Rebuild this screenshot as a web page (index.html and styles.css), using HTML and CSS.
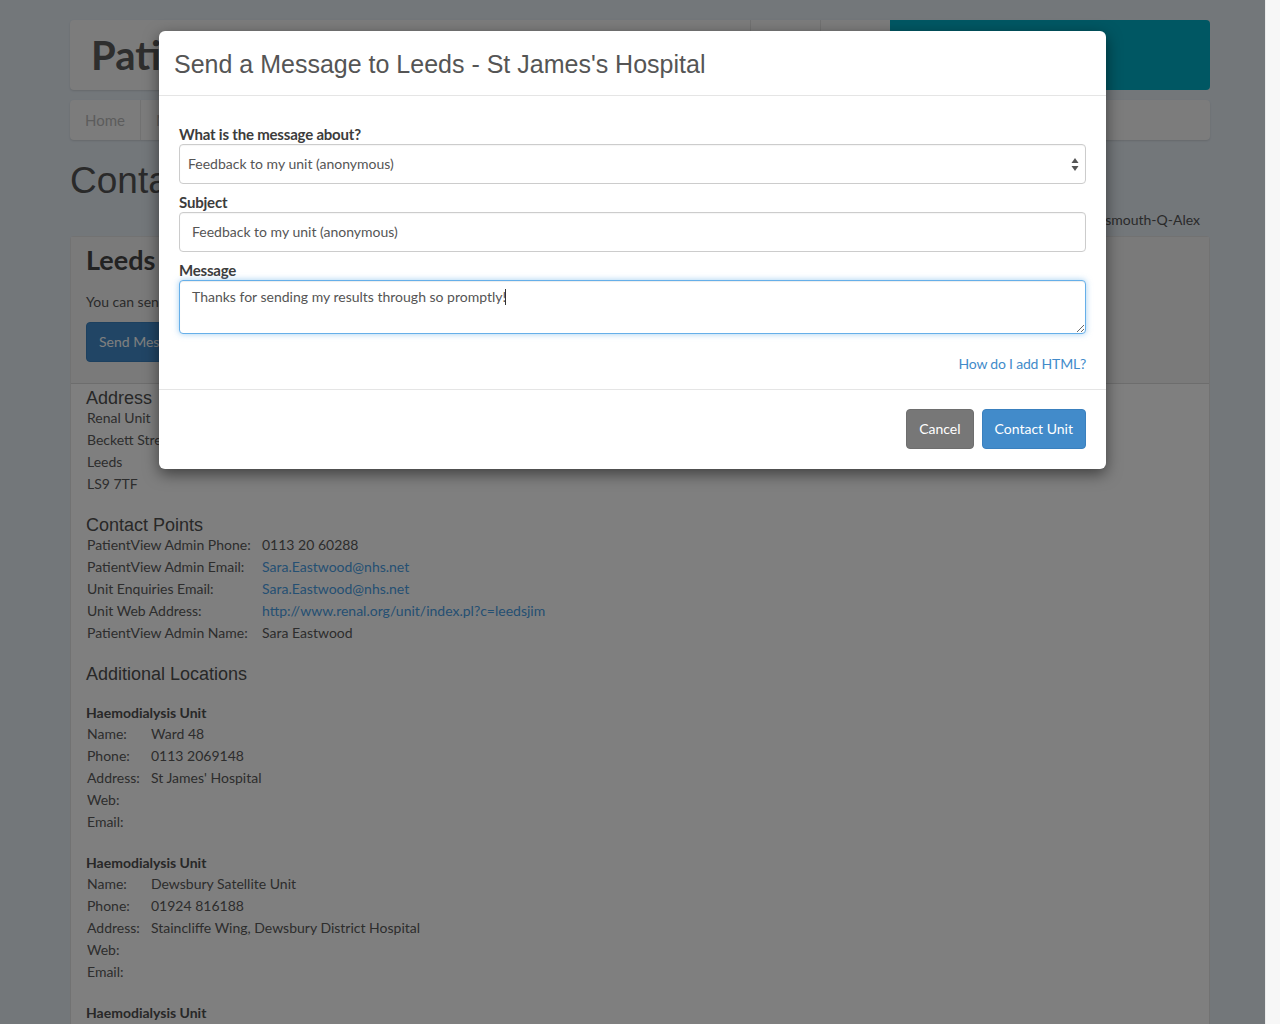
FILE: index.html
```html
<!DOCTYPE html>
<html lang="en">
<head>
<meta charset="utf-8">
<title>Contact Your Unit - PatientView</title>
<link rel="stylesheet" href="styles.css">
</head>
<body>
<div class="viewport">
  <div class="page">
    <div class="topbar">
      <div class="brand-box">
        <div class="brand">PatientView</div>
        <div class="top-links">
          <span class="top-link">Help</span>
          <span class="top-link">Log out</span>
        </div>
      </div>
      <div class="teal-box"></div>
    </div>
    <nav class="navbar">
      <span class="nav-item">Home</span>
      <span class="nav-item">My Results</span>
      <span class="nav-item">Messages</span>
    </nav>
    <div class="title-row">
      <h1 class="page-title">Contact Your Unit</h1>
      <div class="viewing">Patient: Portsmouth-Q-Alex</div>
    </div>
    <section class="panel">
      <div class="panel-heading">
        <h2 class="unit-name">Leeds - St James's Hospital</h2>
        <p class="intro">You can send a message to this unit using the button below.</p>
        <span class="btn btn-primary">Send Message</span>
      </div>
      <div class="panel-body">
        <h3 class="sec-title first">Address</h3>
        <div class="lines">
          <div>Renal Unit</div>
          <div>Beckett Street</div>
          <div>Leeds</div>
          <div>LS9 7TF</div>
        </div>
        <h3 class="sec-title">Contact Points</h3>
        <div class="kv kv-wide">
          <span>PatientView Admin Phone:</span><span>0113 20 60288</span>
          <span>PatientView Admin Email:</span><span class="link">Sara.Eastwood@nhs.net</span>
          <span>Unit Enquiries Email:</span><span class="link">Sara.Eastwood@nhs.net</span>
          <span>Unit Web Address:</span><span class="link">http://www.renal.org/unit/index.pl?c=leedsjim</span>
          <span>PatientView Admin Name:</span><span>Sara Eastwood</span>
        </div>
        <h3 class="sec-title">Additional Locations</h3>
        <div class="loc">
          <div class="loc-title">Haemodialysis Unit</div>
          <div class="kv kv-narrow">
            <span>Name:</span><span>Ward 48</span>
            <span>Phone:</span><span>0113 2069148</span>
            <span>Address:</span><span>St James' Hospital</span>
            <span>Web:</span><span></span>
            <span>Email:</span><span></span>
          </div>
        </div>
        <div class="loc">
          <div class="loc-title">Haemodialysis Unit</div>
          <div class="kv kv-narrow">
            <span>Name:</span><span>Dewsbury Satellite Unit</span>
            <span>Phone:</span><span>01924 816188</span>
            <span>Address:</span><span>Staincliffe Wing, Dewsbury District Hospital</span>
            <span>Web:</span><span></span>
            <span>Email:</span><span></span>
          </div>
        </div>
        <div class="loc">
          <div class="loc-title">Haemodialysis Unit</div>
          <div class="kv kv-narrow">
            <span>Name:</span><span>Seacroft Satellite Unit</span>
            <span>Phone:</span><span>0113 2063000</span>
          </div>
        </div>
      </div>
    </section>
  </div>

  <div class="backdrop"></div>

  <div class="modal-layer">
    <div class="modal">
      <div class="modal-header">
        <h4 class="modal-title">Send a Message to Leeds - St James's Hospital</h4>
      </div>
      <div class="modal-body">
        <label class="field-label" for="about">What is the message about?</label>
        <div class="select-wrap">
          <select id="about" class="form-control select">
            <option>Feedback to my unit (anonymous)</option>
          </select>
          <svg class="select-arrows" width="8" height="13" viewBox="0 0 8 13" aria-hidden="true">
            <path d="M4 0 L7.5 5 L0.5 5 Z" fill="#555"/>
            <path d="M0.5 8 L7.5 8 L4 13 Z" fill="#555"/>
          </svg>
        </div>
        <label class="field-label" for="subject">Subject</label>
        <input id="subject" class="form-control input" type="text" value="Feedback to my unit (anonymous)">
        <label class="field-label" for="message">Message</label>
        <div class="textarea-wrap">
          <textarea id="message" class="form-control textarea">Thanks for sending my results through so promptly!</textarea>
          <span class="caret"></span>
        </div>
        <div class="help-row"><span class="link-help">How do I add HTML?</span></div>
      </div>
      <div class="modal-footer">
        <span class="btn btn-default">Cancel</span>
        <span class="btn btn-primary">Contact Unit</span>
      </div>
    </div>
  </div>
</div>
<div class="scrollbar"></div>
</body>
</html>
```

FILE: styles.css
```css
* { box-sizing: border-box; }

html, body {
  margin: 0;
  padding: 0;
}

body {
  display: flex;
  width: 1280px;
  height: 1024px;
  overflow: hidden;
  font-family: Lato, "Open Sans", sans-serif;
  font-size: 14px;
  color: #555;
  background: #e6eef5;
}

.viewport {
  position: relative;
  width: 1265px;
  height: 1024px;
  overflow: hidden;
  flex: none;
}

.scrollbar {
  width: 15px;
  height: 1024px;
  flex: none;
  background: #f7f7f7;
  border-left: 1px solid #ececec;
}

.page {
  width: 1140px;
  margin-left: 70px;
  padding-top: 20px;
}

/* top header */
.topbar {
  display: flex;
  height: 70px;
}

.brand-box {
  flex: 1;
  display: flex;
  background: #f8f8f8;
  border-radius: 4px 0 0 4px;
  box-shadow: 0 1px 2px rgba(0,0,0,0.12);
}

.brand {
  flex: 1;
  padding-left: 21px;
  font-weight: 700;
  font-size: 40px;
  line-height: 70px;
  color: #5c5c5c;
}

.top-links {
  display: flex;
}

.top-link {
  width: 70px;
  border-left: 1px solid #e2e2e2;
  text-align: center;
  line-height: 70px;
  color: #999;
  font-size: 14px;
}

.teal-box {
  width: 320px;
  background: #00aec6;
  border-radius: 0 4px 4px 0;
}

/* nav */
.navbar {
  display: flex;
  height: 40px;
  margin-top: 10px;
  background: #f8f8f8;
  border-radius: 4px;
  box-shadow: 0 1px 2px rgba(0,0,0,0.12);
}

.nav-item {
  padding: 0 15px;
  line-height: 40px;
  font-size: 15px;
  color: #b8b8b8;
  border-right: 1px solid #e2e2e2;
}

/* title row */
.title-row {
  height: 96px;
}

.page-title {
  margin: 0;
  padding-top: 21px;
  font-family: "Liberation Sans", Arial, sans-serif;
  font-weight: 400;
  font-size: 37px;
  line-height: 40px;
  color: #555;
}

.viewing {
  text-align: right;
  padding-right: 10px;
  margin-top: 9px;
  font-size: 14px;
  line-height: 20px;
  color: #555;
}

/* panel */
.panel {
  background: #fff;
  border: 1px solid #e4e4e4;
  border-radius: 4px 4px 0 0;
  border-bottom: 0;
  height: 800px;
}

.panel-heading {
  height: 147px;
  padding: 6px 15px 0;
  background: #f5f5f5;
  border-bottom: 1px solid #dadada;
}

.unit-name {
  margin: 0;
  font-family: Lato, sans-serif;
  font-weight: 700;
  font-size: 27px;
  line-height: 34px;
  color: #444;
}

.intro {
  margin: 15px 0 0;
  line-height: 20px;
  color: #555;
}

.panel-heading .btn {
  margin-top: 10px;
}

.panel-body {
  padding: 5px 16px 0;
}

.sec-title {
  margin: 21px 0 0 -1px;
  font-family: "Liberation Sans", Arial, sans-serif;
  font-weight: 400;
  font-size: 18px;
  line-height: 18px;
  color: #505050;
}

.sec-title.first {
  margin-top: 0;
}

.lines {
  line-height: 22px;
  color: #5a5a5a;
}

.kv {
  display: grid;
  line-height: 22px;
  color: #5a5a5a;
}

.kv-wide {
  grid-template-columns: 175px auto;
}

.kv-narrow {
  grid-template-columns: 64px auto;
}

.kv span {
  min-height: 22px;
}

.link {
  color: #4aa0e6;
}

.loc {
  margin-top: 19px;
}

.loc-title {
  font-weight: 700;
  line-height: 21px;
  color: #505050;
  margin-left: -1px;
}

/* buttons */
.btn {
  display: inline-block;
  height: 40px;
  padding: 0 12px;
  line-height: 38px;
  font-size: 14px;
  border-radius: 4px;
  border: 1px solid transparent;
  color: #fff;
  white-space: nowrap;
}

.btn-primary {
  background: #428bca;
  border-color: #3a80be;
}

.btn-default {
  background: #777;
  border-color: #6e6e6e;
}

/* overlay */
.backdrop {
  position: absolute;
  inset: 0;
  background: rgba(0,0,0,0.5);
}

.modal-layer {
  position: absolute;
  inset: 0;
  padding-top: 31px;
}

.modal {
  width: 947px;
  margin: 0 auto;
  background: #fff;
  border-radius: 6px;
  box-shadow: 0 5px 15px rgba(0,0,0,0.5);
}

.modal-header {
  height: 65px;
  padding: 0 15px;
  border-bottom: 1px solid #e5e5e5;
  display: flex;
  align-items: center;
}

.modal-title {
  margin: 2px 0 0;
  font-family: "Liberation Sans", Arial, sans-serif;
  font-weight: 400;
  font-size: 25px;
  line-height: 30px;
  color: #555;
}

.modal-body {
  padding: 28px 20px 15px;
  display: flex;
  flex-direction: column;
}

.field-label {
  font-weight: 700;
  font-size: 15px;
  line-height: 20px;
  color: #3c3c3c;
  letter-spacing: -0.2px;
}

.select-wrap + .field-label,
.input + .field-label {
  margin-top: 8px;
}

.form-control {
  display: block;
  width: 100%;
  font-family: Lato, sans-serif;
  font-size: 14px;
  color: #555;
  background: #fff;
  border: 1px solid #ccc;
  border-radius: 4px;
  box-shadow: inset 0 1px 1px rgba(0,0,0,0.04);
  outline: none;
}

.select-wrap {
  position: relative;
}

.select {
  height: 40px;
  padding: 0 8px 1px;
  appearance: none;
  -webkit-appearance: none;
}

.select-arrows {
  position: absolute;
  right: 7px;
  top: 14px;
}

.input {
  height: 40px;
  padding: 0 12px 1px;
}

.textarea-wrap {
  position: relative;
}

.textarea {
  height: 54px;
  padding: 6px 12px;
  line-height: 20px;
  resize: vertical;
  border-color: #66afe9;
  box-shadow: inset 0 1px 1px rgba(0,0,0,0.075), 0 0 6px rgba(102,175,233,0.6);
}

.caret {
  position: absolute;
  left: 326px;
  top: 9px;
  width: 1px;
  height: 16px;
  background: #333;
}

.help-row {
  margin-top: 20px;
  text-align: right;
  line-height: 20px;
}

.link-help {
  color: #428bca;
  letter-spacing: -0.2px;
}

.modal-footer {
  display: flex;
  justify-content: flex-end;
  gap: 8px;
  padding: 19px 20px 20px;
  border-top: 1px solid #e5e5e5;
}
```
